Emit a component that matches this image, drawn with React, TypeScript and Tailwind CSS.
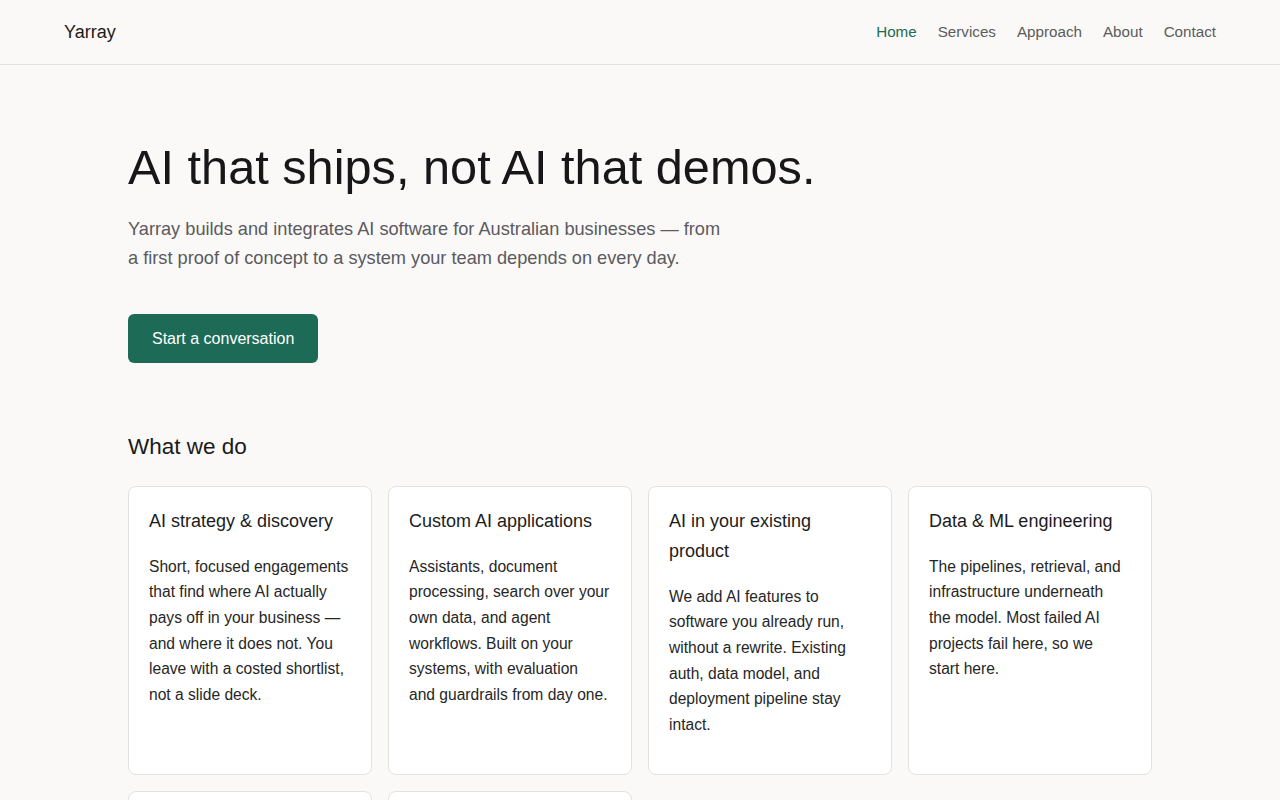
const services = [
  {
    title: "AI strategy & discovery",
    lines: [
      "Short, focused engagements",
      "that find where AI actually",
      "pays off in your business —",
      "and where it does not. You",
      "leave with a costed shortlist,",
      "not a slide deck.",
    ],
  },
  {
    title: "Custom AI applications",
    lines: [
      "Assistants, document",
      "processing, search over your",
      "own data, and agent",
      "workflows. Built on your",
      "systems, with evaluation",
      "and guardrails from day one.",
    ],
  },
  {
    title: "AI in your existing product",
    lines: [
      "We add AI features to",
      "software you already run,",
      "without a rewrite. Existing",
      "auth, data model, and",
      "deployment pipeline stay",
      "intact.",
    ],
  },
  {
    title: "Data & ML engineering",
    lines: [
      "The pipelines, retrieval, and",
      "infrastructure underneath",
      "the model. Most failed AI",
      "projects fail here, so we",
      "start here.",
    ],
  },
  {
    title: "Evaluation & reliability",
    lines: [
      "Test suites, monitoring, and",
      "review loops that tell you",
      "whether the system is still",
      "doing its job after launch.",
    ],
  },
  {
    title: "Ongoing support",
    lines: [
      "We stay on after delivery to",
      "tune, extend, and operate",
      "what we built, alongside",
      "your own team.",
    ],
  },
];

const nav = ["Home", "Services", "Approach", "About", "Contact"];

export default function App() {
  return (
    <div className="min-h-screen bg-[#faf9f7] text-[#1a1a1a] font-['Liberation_Sans',Arial,sans-serif]">
      {/* Header */}
      <header className="h-[65px] border-b border-[#e4e2de] px-16 flex items-center justify-between">
        <span className="text-[18px] text-[#1c1c1c]">Yarray</span>
        <nav className="flex items-center gap-[21px] text-[15.2px]">
          {nav.map((item) => (
            <a
              key={item}
              href="#"
              className={item === "Home" ? "text-[#1f6b55]" : "text-[#5c5c5c]"}
            >
              {item}
            </a>
          ))}
        </nav>
      </header>

      <main className="max-w-[1024px] mx-auto">
        {/* Hero */}
        <section className="pt-[76px]">
          <h1 className="text-[48.7px] leading-[1.1] text-[#17171a]">
            AI that ships, not AI that demos.
          </h1>
          <p className="mt-5 max-w-[605px] text-[18.2px] leading-[29px] text-[#5a5a60]">
            Yarray builds and integrates AI software for Australian businesses — from a
            first proof of concept to a system your team depends on every day.
          </p>
          <a
            href="#"
            className="mt-[41px] inline-block rounded-md bg-[#1d6b57] px-6 py-3 text-[16px] leading-[25px] text-white"
          >
            Start a conversation
          </a>
        </section>

        {/* Services */}
        <section className="pt-[69px] pb-16">
          <h2 className="text-[22.5px] leading-[1.3] text-[#1a1a1a]">What we do</h2>
          <div className="mt-[25px] grid grid-cols-4 gap-4">
            {services.map((s) => (
              <div
                key={s.title}
                className="min-h-[289px] rounded-lg border border-[#e4e2de] bg-white px-5 pt-[19px] pb-5"
              >
                <h3 className="text-[18px] leading-[30px] text-[#1c1c1c]">{s.title}</h3>
                <p className="mt-[18px] text-[15.6px] leading-[25.6px] text-[#262626]">
                  {s.lines.map((line, i) => (
                    <span key={i} className="block whitespace-nowrap">
                      {line}
                    </span>
                  ))}
                </p>
              </div>
            ))}
          </div>
        </section>
      </main>
    </div>
  );
}
